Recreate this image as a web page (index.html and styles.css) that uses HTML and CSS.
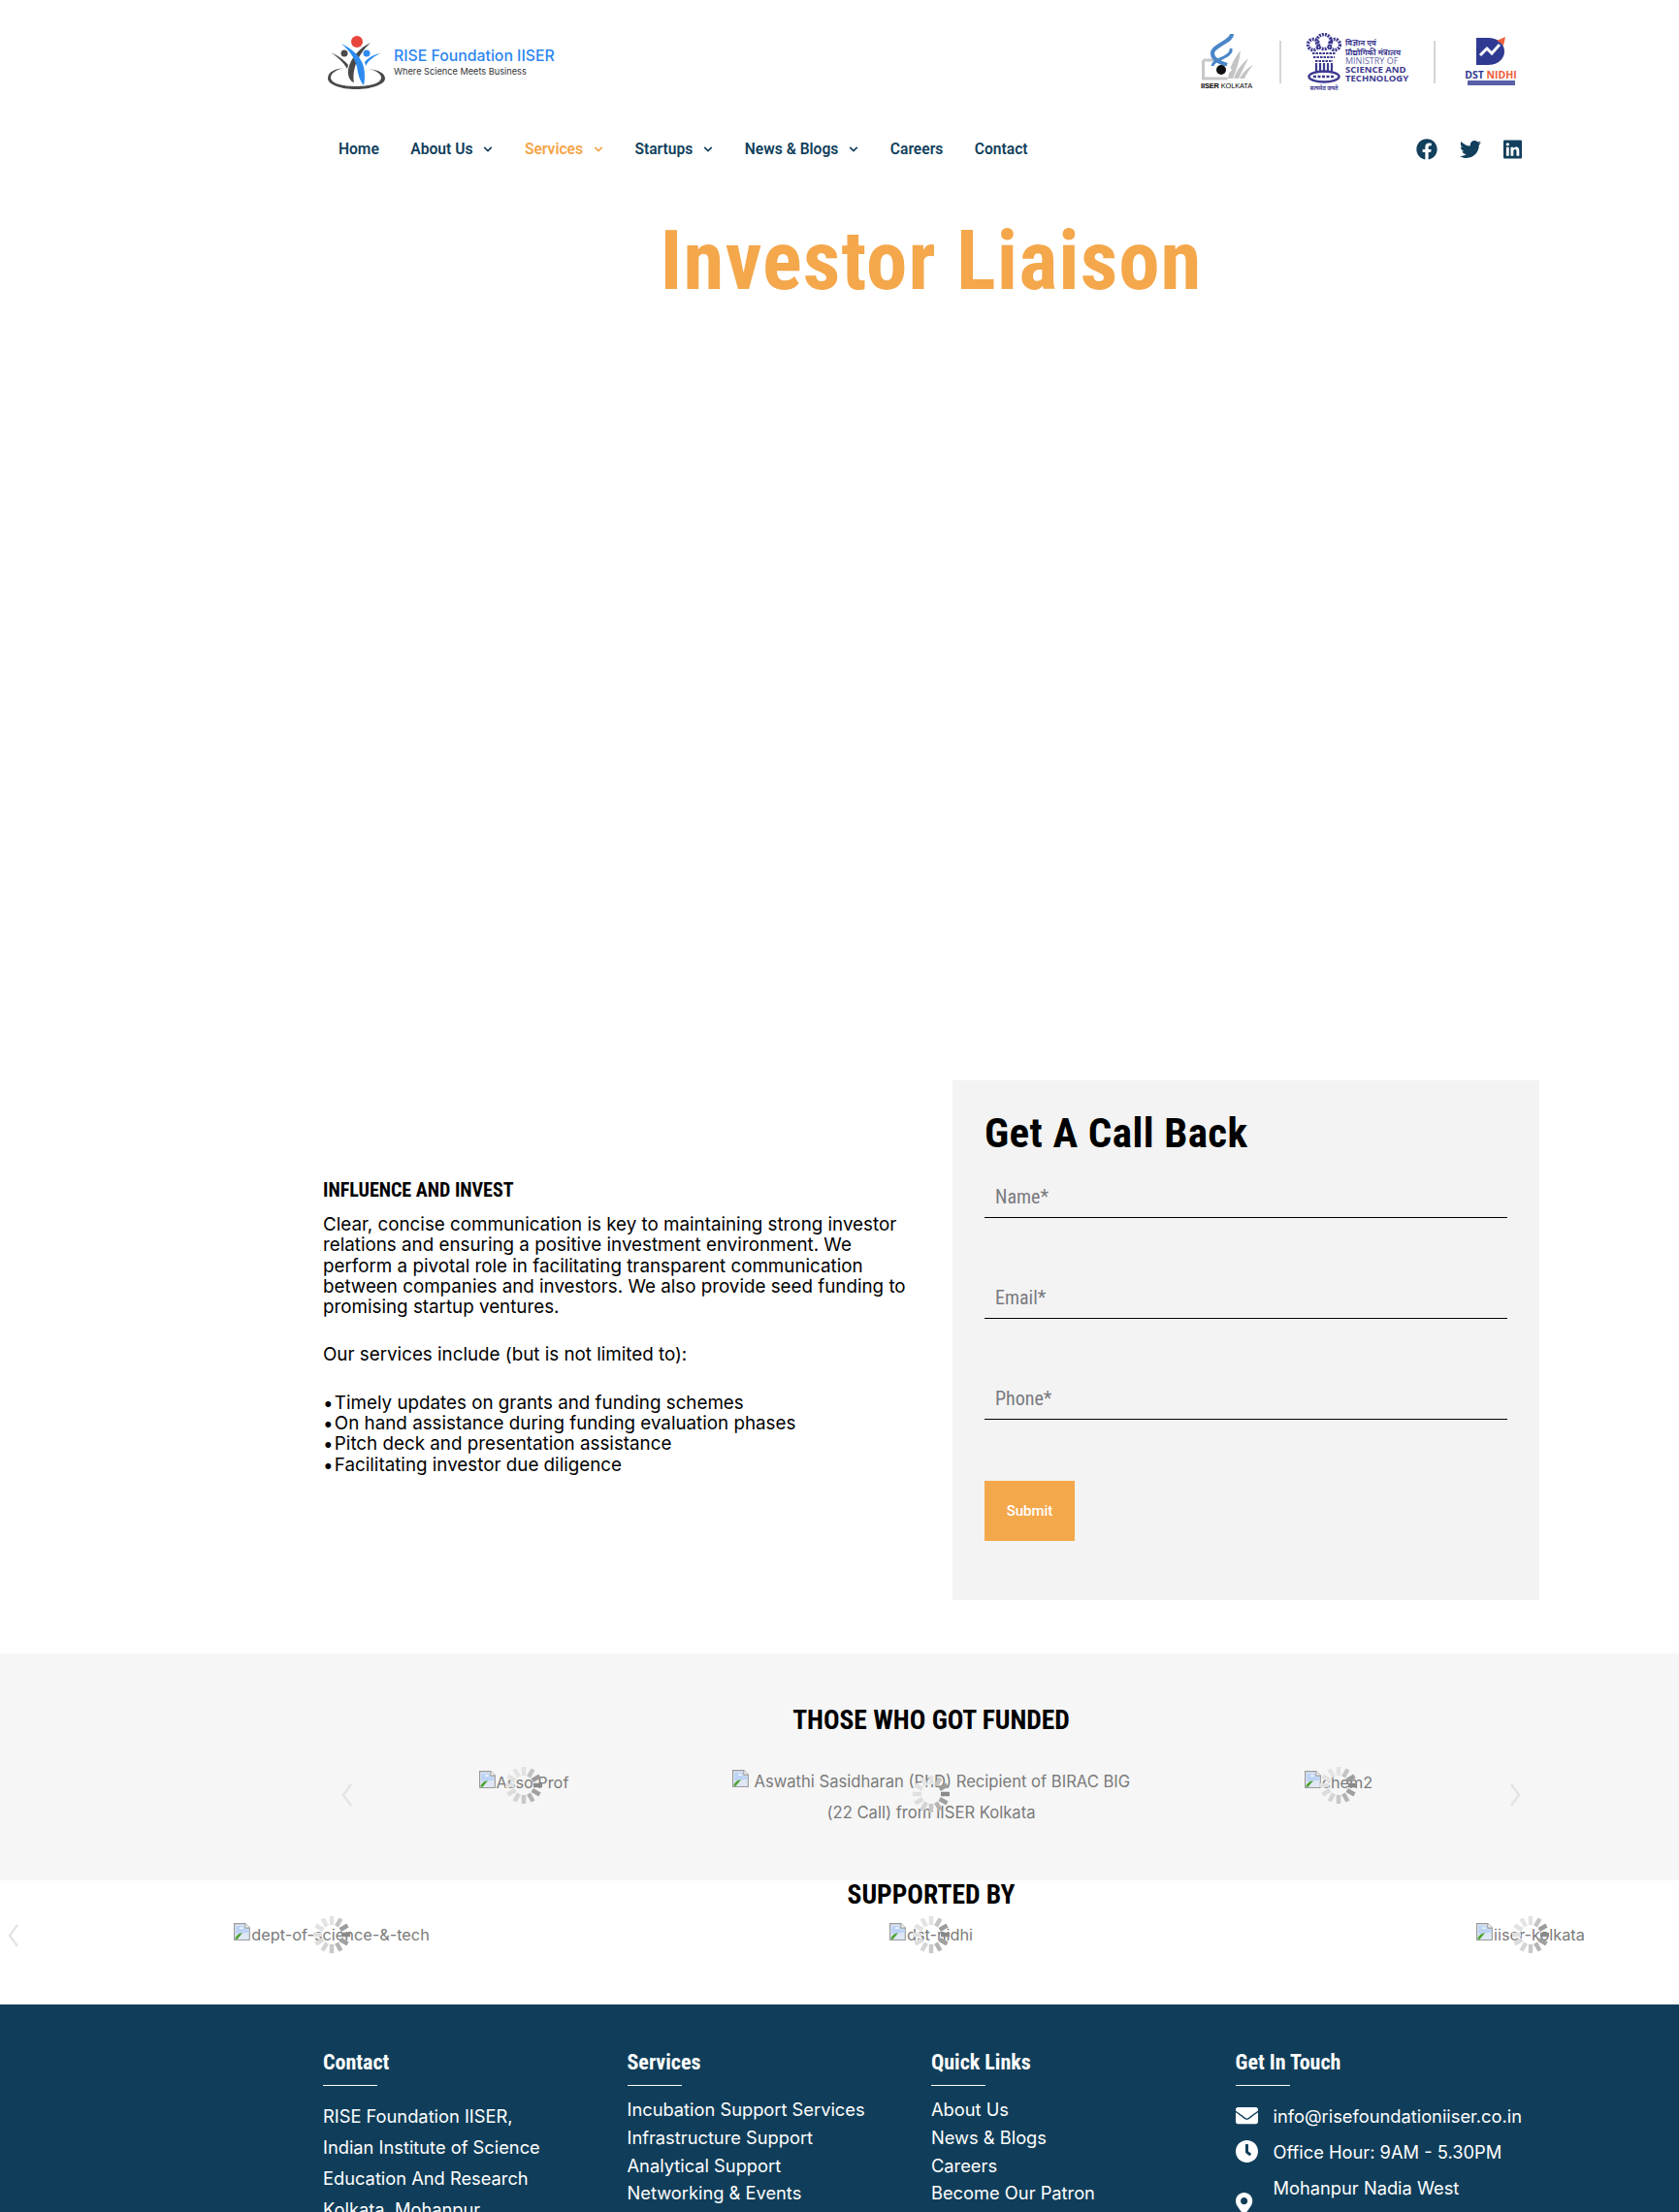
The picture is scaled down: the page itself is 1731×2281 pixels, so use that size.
FILE: index.html
```html
<!DOCTYPE html>
<html lang="en">
<head>
<meta charset="utf-8">
<title>Investor Liaison</title>
<link rel="stylesheet" href="styles.css">
</head>
<body>
<svg class="defs" width="0" height="0" aria-hidden="true">
  <symbol id="broken" viewBox="0 0 16 16">
    <path d="M.5.5h10l4 4v11H.5z" fill="#dfe7f5" stroke="#9a9a9a"/>
    <path d="M10.5.5v4h4" fill="#fff" stroke="#9a9a9a"/>
    <path d="M2 2.5h7.5v3H14v3L2 10z" fill="#bcd3f5"/>
    <path d="M5 5c1-1.500 3-1.500 4 0z" fill="#fff"/>
    <path d="M1 14.500c1-3 4-5.500 7-5.500l-5 6z" fill="#4ca32d"/>
  </symbol>
  <symbol id="spin" viewBox="0 0 40 40">
    <g fill="none" stroke-width="4.500" stroke-linecap="butt">
      <path d="M20 1v9" stroke="#e2e2e2"/>
      <path d="M29.500 3.500l-4.500 7.800" stroke="#c4c4c4"/>
      <path d="M36.500 10.500l-7.800 4.500" stroke="#9c9c9c"/>
      <path d="M39 20h-9" stroke="#8a8a8a"/>
      <path d="M36.500 29.500l-7.800-4.500" stroke="#a0a0a0"/>
      <path d="M29.500 36.500l-4.500-7.800" stroke="#b4b4b4"/>
      <path d="M20 39v-9" stroke="#c8c8c8"/>
      <path d="M10.500 36.500l4.500-7.800" stroke="#d4d4d4"/>
      <path d="M3.500 29.500l7.800-4.500" stroke="#dcdcdc"/>
      <path d="M1 20h9" stroke="#e0e0e0"/>
      <path d="M3.500 10.500l7.800 4.500" stroke="#e2e2e2"/>
      <path d="M10.500 3.500l4.500 7.800" stroke="#e4e4e4"/>
    </g>
  </symbol>
  <symbol id="chev" viewBox="0 0 12 8"><path d="M1.500 1.500L6 6l4.500-4.500" fill="none" stroke="currentColor" stroke-width="2"/></symbol>
  <symbol id="arrow" viewBox="0 0 14 28"><path d="M11 3L3 14l8 11" fill="none" stroke="#e4e4e4" stroke-width="2.500"/></symbol>
</svg>

<div class="page">
  <header class="masthead">
    <div class="brand">
      <svg class="brand-mark" viewBox="0 0 66 62" width="66" height="62" aria-hidden="true">
        <path d="M3 47C3 39 12 37 20 36 11 38 6 42 6 46c0 6 12 9 26 9s26-3 26-9c0-4-6-8-14-9 11 1 18 4 18 10 0 6-14 11-30 11S3 53 3 47z" fill="#4a4a4a"/>
        <circle cx="33" cy="9" r="6" fill="#e8453c"/>
        <circle cx="20" cy="21" r="3.500" fill="#4a4a4a"/>
        <circle cx="43" cy="21" r="3.500" fill="#2e8cf0"/>
        <path d="M47 10C36 15 26 26 24 38c-1 6 2 12 6 13-2-11 2-27 17-41z" fill="#4a4a4a"/>
        <path d="M17 11c10 5 18 11 22 21 3 8 2 18 1 22-4-4-6-12-7-19-2-9-8-17-16-24z" fill="#2e8cf0"/>
        <path d="M6 20c6 3 12 6 18 13l-1 4C19 30 13 25 6 20z" fill="#4a4a4a"/>
        <path d="M57 21c-6 3-12 7-15 13l-1-4c4-5 10-8 16-9z" fill="#2e8cf0"/>
      </svg>
      <div class="brand-text">
        <span class="brand-name">RISE Foundation IISER</span>
        <span class="brand-tag">Where Science Meets Business</span>
      </div>
    </div>
    <div class="partners">
      <div class="partner-iiser">
        <svg viewBox="0 0 54 48" width="54" height="48" aria-hidden="true">
          <path d="M2.500 27h14l4 3M2.500 27v19h25" fill="none" stroke="#c8c8c8" stroke-width="3"/>
          <path d="M28 46c1-10 6-21 13-29-1 10-4 20-8 29z M34 46c3-9 9-16 15-21-3 7-7 14-10 21z M40 46c3-6 8-11 14-14-4 5-7 9-9 14z" fill="#c4c4c4"/>
          <path d="M32 0c0 8-20 12-20 20 0 7 9 10 15 12" fill="none" stroke="#4a86c8" stroke-width="4"/>
          <path d="M12 33c0-4 6-6 12-9 4-2 8-5 7-9" fill="none" stroke="#4a86c8" stroke-width="3"/>
          <path d="M10 37c4-6 18-6 22 0-4 7-18 7-22 0z" fill="#fff"/>
          <circle cx="21" cy="37" r="5" fill="#111"/>
        </svg>
        <span class="iiser-label"><b>IISER</b> KOLKATA</span>
      </div>
      <span class="partner-rule"></span>
      <div class="partner-most">
        <svg viewBox="0 0 36 60" width="36" height="60" aria-hidden="true">
          <g fill="none" stroke="#3d3a8f">
            <circle cx="18" cy="9" r="7.500" stroke-width="3.500" stroke-dasharray="2 1"/>
            <circle cx="7" cy="12" r="5.500" stroke-width="3.500" stroke-dasharray="2 1"/>
            <circle cx="29" cy="12" r="5.500" stroke-width="3.500" stroke-dasharray="2 1"/>
            <path d="M6 21h24M7 25h22M9 29h18" stroke-width="2" stroke-dasharray="2.500 1"/>
            <path d="M10 31v10M14 31v10M18 31v10M22 31v10M26 31v10" stroke-width="2.200"/>
            <ellipse cx="18" cy="45" rx="15.500" ry="5.500" stroke-width="2.500"/>
            <path d="M7 45h22" stroke-width="2.500" stroke-dasharray="3 1.500"/>
          </g>
          <text class="motto" x="18" y="59" text-anchor="middle">सत्यमेव जयते</text>
        </svg>
        <div class="most-text">
          <span class="hi">विज्ञान एवं</span>
          <span class="hi">प्रौद्योगिकी मंत्रालय</span>
          <span class="most-light">MINISTRY OF</span>
          <span class="most-bold">SCIENCE AND</span>
          <span class="most-bold">TECHNOLOGY</span>
        </div>
      </div>
      <span class="partner-rule"></span>
      <div class="partner-dst">
        <svg viewBox="0 0 32 30" width="32" height="30" aria-hidden="true">
          <path d="M1 1h12c10 0 17 6 17 14s-7 14-17 14H1z" fill="#2f3a92"/>
          <path d="M5 19l7-7 5 5 8-9" fill="none" stroke="#fff" stroke-width="3"/>
          <path d="M31 0l-2 9-3-3-4-2z" fill="#f0603c"/>
        </svg>
        <span class="dst-name">DST <em>NIDHI</em></span>
        <span class="dst-bar"></span>
      </div>
    </div>
  </header>

  <nav class="mainnav">
    <ul class="menu">
      <li>Home</li>
      <li>About Us<svg class="chev"><use href="#chev"/></svg></li>
      <li class="active">Services<svg class="chev"><use href="#chev"/></svg></li>
      <li>Startups<svg class="chev"><use href="#chev"/></svg></li>
      <li>News &amp; Blogs<svg class="chev"><use href="#chev"/></svg></li>
      <li>Careers</li>
      <li>Contact</li>
    </ul>
    <div class="socials">
      <svg viewBox="0 0 512 512" width="22" height="22"><path d="M504 256C504 119 393 8 256 8S8 119 8 256c0 123.780 90.690 226.380 209.250 245V327.690h-63V256h63v-54.640c0-62.150 37-96.480 93.670-96.480 27.140 0 55.520 4.840 55.520 4.840v61h-31.280c-30.800 0-40.410 19.120-40.410 38.730V256h68.780l-11 71.690h-57.780V501C413.310 482.380 504 379.780 504 256z"/></svg>
      <svg viewBox="0 0 512 512" width="22" height="22"><path d="M459.370 151.716c.325 4.548.325 9.097.325 13.645 0 138.720-105.583 298.558-298.558 298.558-59.452 0-114.680-17.219-161.137-47.106 8.447.974 16.568 1.299 25.340 1.299 49.055 0 94.213-16.568 130.274-44.832-46.132-.975-84.792-31.188-98.112-72.772 6.498.974 12.995 1.624 19.818 1.624 9.421 0 18.843-1.300 27.614-3.573-48.081-9.747-84.143-51.980-84.143-102.985v-1.299c13.969 7.797 30.214 12.670 47.431 13.319-28.264-18.843-46.781-51.005-46.781-87.391 0-19.492 5.197-37.360 14.294-52.954 51.655 63.675 129.300 105.258 216.365 109.807-1.624-7.797-2.599-15.918-2.599-24.040 0-57.828 46.782-104.934 104.934-104.934 30.213 0 57.502 12.670 76.670 33.137 23.715-4.548 46.456-13.320 66.599-25.340-7.798 24.366-24.366 44.833-46.132 57.827 21.117-2.273 41.584-8.122 60.426-16.243-14.292 20.791-32.161 39.308-52.628 54.253z"/></svg>
      <svg viewBox="0 0 448 512" width="19" height="22"><path d="M416 32H31.900C14.300 32 0 46.500 0 64.300v383.400C0 465.500 14.300 480 31.900 480H416c17.600 0 32-14.500 32-32.300V64.300c0-17.800-14.400-32.300-32-32.300zM135.400 416H69V202.200h66.500V416zm-33.200-243c-21.300 0-38.500-17.300-38.500-38.500S80.900 96 102.200 96c21.200 0 38.500 17.300 38.500 38.500 0 21.300-17.200 38.500-38.500 38.500zm282.100 243h-66.400V312c0-24.800-.5-56.700-34.500-56.700-34.600 0-39.900 27-39.900 54.900V416h-66.400V202.200h63.700v29.200h.9c8.900-16.800 30.600-34.500 62.900-34.500 67.200 0 79.700 44.300 79.700 101.900V416z"/></svg>
    </div>
  </nav>

  <main class="wrap">
    <h1 class="page-title">Investor Liaison</h1>
    <section class="intro">
      <div class="intro-copy">
        <h2 class="intro-head">INFLUENCE AND INVEST</h2>
        <p class="copy">Clear, concise communication is key to maintaining strong investor relations and ensuring a positive investment environment. We perform a pivotal role in facilitating transparent communication between companies and investors. We also provide seed funding to promising startup ventures.</p>
        <p class="copy">Our services include (but is not limited to):</p>
        <p class="copy"><span class="dot">•</span> Timely updates on grants and funding schemes<br><span class="dot">•</span> On hand assistance during funding evaluation phases<br><span class="dot">•</span> Pitch deck and presentation assistance<br><span class="dot">•</span> Facilitating investor due diligence</p>
      </div>
      <form class="callback">
        <h2 class="callback-head">Get A Call Back</h2>
        <div class="field">Name*</div>
        <div class="field">Email*</div>
        <div class="field">Phone*</div>
        <button class="submit" type="button">Submit</button>
      </form>
    </section>
  </main>

  <section class="funded">
    <h2 class="band-head">THOSE WHO GOT FUNDED</h2>
    <div class="slider slider-funded">
      <svg class="arrow arrow-left"><use href="#arrow"/></svg>
      <div class="slide"><span class="alt"><svg class="broken"><use href="#broken"/></svg>Asso Prof</span><svg class="spin"><use href="#spin"/></svg></div>
      <div class="slide slide-wide"><span class="alt alt-wide"><svg class="broken"><use href="#broken"/></svg> Aswathi Sasidharan (PhD) Recipient of BIRAC BIG (22 Call) from IISER Kolkata</span><svg class="spin"><use href="#spin"/></svg></div>
      <div class="slide"><span class="alt"><svg class="broken"><use href="#broken"/></svg>chem2</span><svg class="spin"><use href="#spin"/></svg></div>
      <svg class="arrow arrow-right"><use href="#arrow"/></svg>
    </div>
  </section>

  <section class="supported">
    <h2 class="band-head band-head-tight">SUPPORTED BY</h2>
    <svg class="arrow arrow-edge"><use href="#arrow"/></svg>
    <div class="slider slider-supported">
      <div class="slide"><span class="alt"><svg class="broken"><use href="#broken"/></svg>dept-of-science-&amp;-tech</span><svg class="spin"><use href="#spin"/></svg></div>
      <div class="slide"><span class="alt"><svg class="broken"><use href="#broken"/></svg>dst-nidhi</span><svg class="spin"><use href="#spin"/></svg></div>
      <div class="slide"><span class="alt"><svg class="broken"><use href="#broken"/></svg>iiser-kolkata</span><svg class="spin"><use href="#spin"/></svg></div>
    </div>
  </section>

  <footer class="footer">
    <div class="foot-col">
      <h3 class="foot-head">Contact</h3>
      <p class="foot-address">RISE Foundation IISER,<br>Indian Institute of Science<br>Education And Research<br>Kolkata, Mohanpur</p>
    </div>
    <div class="foot-col">
      <h3 class="foot-head">Services</h3>
      <ul class="foot-links">
        <li>Incubation Support Services</li>
        <li>Infrastructure Support</li>
        <li>Analytical Support</li>
        <li>Networking &amp; Events</li>
      </ul>
    </div>
    <div class="foot-col">
      <h3 class="foot-head">Quick Links</h3>
      <ul class="foot-links">
        <li>About Us</li>
        <li>News &amp; Blogs</li>
        <li>Careers</li>
        <li>Become Our Patron</li>
      </ul>
    </div>
    <div class="foot-col">
      <h3 class="foot-head">Get In Touch</h3>
      <ul class="foot-touch">
        <li><svg viewBox="0 0 512 512" preserveAspectRatio="xMinYMid meet"><path d="M502.300 190.800c3.900-3.100 9.700-.2 9.700 4.700V400c0 26.500-21.500 48-48 48H48c-26.500 0-48-21.500-48-48V195.600c0-5 5.700-7.800 9.700-4.700 22.400 17.400 52.100 39.500 154.100 113.600 21.100 15.400 56.700 47.800 92.200 47.600 35.700.3 72-32.800 92.300-47.600 102-74.100 131.600-96.300 154-113.700zM256 320c23.200.4 56.600-29.200 73.400-41.400 132.700-96.300 142.800-104.700 173.400-128.700 5.800-4.500 9.200-11.500 9.200-18.900v-19c0-26.500-21.500-48-48-48H48C21.500 64 0 85.500 0 112v19c0 7.400 3.400 14.300 9.200 18.900 30.600 23.900 40.700 32.400 173.400 128.700 16.800 12.200 50.200 41.800 73.400 41.400z"/></svg>info@risefoundationiiser.co.in</li>
        <li><svg viewBox="8 8 496 496" preserveAspectRatio="xMinYMid meet"><path d="M256 8C119 8 8 119 8 256s111 248 248 248 248-111 248-248S393 8 256 8zm92.490 313l-20 25a16 16 0 0 1-22.490 2.500l-67-49.720a40 40 0 0 1-15-31.230V112a16 16 0 0 1 16-16h32a16 16 0 0 1 16 16v144l58 42.500a16 16 0 0 1 2.490 22.500z"/></svg>Office Hour: 9AM - 5.30PM</li>
        <li class="touch-tall"><svg viewBox="0 0 384 512" preserveAspectRatio="xMinYMid meet"><path d="M172.268 501.670C26.970 291.031 0 268.413 0 192 0 85.961 85.961 0 192 0s192 85.961 192 192c0 76.413-26.970 99.031-172.268 309.670-9.535 13.774-29.930 13.773-39.464 0zM192 272c44.183 0 80-35.817 80-80s-35.817-80-80-80-80 35.817-80 80 35.817 80 80 80z"/></svg><span>Mohanpur Nadia West<br>Bengal 741246</span></li>
      </ul>
    </div>
  </footer>
</div>
</body>
</html>
```

FILE: styles.css
```css
* { box-sizing: border-box; }
html, body { margin: 0; padding: 0; background: #fff; }
body { font-family: Inter, "Noto Sans", sans-serif; color: #000; }
.defs { position: absolute; }
.page { width: 1731px; height: 2281px; overflow: hidden; }

.masthead { display: flex; justify-content: space-between; align-items: flex-start; height: 122px; padding: 34px 169px 0 335px; }
.brand { display: flex; align-items: flex-start; gap: 5px; }
.brand-text { display: flex; flex-direction: column; padding-top: 14px; }
.brand-name { font: 500 15.800px/20px Inter, sans-serif; color: #2e86f0; white-space: nowrap; }
.brand-tag { font: 400 9.200px/12px Inter, sans-serif; color: #333; white-space: nowrap; }

.partners { display: flex; align-items: flex-start; }
.partner-iiser { width: 54px; margin-right: 27px; display: flex; flex-direction: column; padding-top: 1px; }
.iiser-label { font: 400 7.400px/10px "Liberation Sans", sans-serif; white-space: nowrap; margin-top: 1px; letter-spacing: -.1px; }
.iiser-label b { font-weight: 700; }
.partner-rule { width: 2px; height: 44px; background: #d6d6d6; margin-top: 8px; }
.partner-most { display: flex; gap: 4px; margin-left: 26px; margin-right: 26px; align-items: flex-start; }
.motto { font: 700 5.500px "Noto Sans", sans-serif; fill: #3d3a8f; }
.most-text { display: flex; flex-direction: column; padding-top: 5px; width: 65px; color: #3d3a8f; font-family: "Open Sans", sans-serif; white-space: nowrap; }
.most-text .hi { font: 700 8px/9.500px "Noto Sans", "Noto Sans CJK SC", sans-serif; }
.most-light { font-size: 9px; line-height: 9px; color: #6a68a8; }
.most-bold { font-size: 9.500px; line-height: 9.300px; font-weight: 700; }
.partner-dst { width: 50px; margin-left: 32px; display: flex; flex-direction: column; align-items: center; padding-top: 4px; }
.dst-name { font: 700 10.500px/12px "Open Sans", sans-serif; color: #2f3a92; margin-top: 3px; white-space: nowrap; }
.dst-name em { font-style: normal; color: #ee5d3a; }
.dst-bar { width: 49px; height: 5px; background: #5a60a8; }

.mainnav { display: flex; justify-content: space-between; align-items: center; height: 64px; padding: 0 162px 0 349px; }
.menu { display: flex; list-style: none; margin: 0; padding: 0; gap: 32.500px; font: 600 15.600px/20px Roboto, sans-serif; color: #123f5c; }
.menu li { display: flex; align-items: center; white-space: nowrap; }
.menu .active { color: #f4a54a; }
.chev { width: 10px; height: 8px; margin-left: 11px; }
.socials { display: flex; gap: 23px; align-items: center; fill: #123f5c; }

.wrap { width: 1254px; margin-left: 333px; }
.page-title { margin: 33px 0 0; text-align: center; font: 700 85px/100px "Roboto Condensed", "Liberation Sans Narrow", Roboto, sans-serif; font-stretch: condensed; color: #f4a74b; height: 100px; letter-spacing: 1px; }
.intro { display: flex; margin-top: 795px; }
.intro-copy { width: 649px; padding-top: 100px; }
.intro-head { margin: 0 0 12px; font: 700 20px/26px "Roboto Condensed", "Liberation Sans Narrow", Roboto, sans-serif; font-stretch: condensed; }
.copy { margin: 0 0 28px; font: 400 18.800px/21.300px Inter, sans-serif; width: 612px; }
.dot { margin-right: -4px; }

.callback { width: 605px; height: 536px; background: #f3f3f3; padding: 27px 33px 0; }
.callback-head { margin: 0 0 11px; font: 700 43px/54px "Roboto Condensed", "Liberation Sans Narrow", Roboto, sans-serif; font-stretch: condensed; letter-spacing: .4px; }
.field { height: 50px; margin-bottom: 54px; padding: 16px 11px 0; border-bottom: 1px solid #000; font: 400 20px/24px "Roboto Condensed", Roboto, sans-serif; font-stretch: condensed; color: #7a7a80; }
.submit { display: block; width: 93px; height: 62px; border: 0; background: #f4a84c; color: #fff; font: 500 15px/20px Roboto, sans-serif; margin-top: 63px; padding: 0; }

.funded { margin-top: 55px; height: 234px; background: #f6f6f6; padding: 51px 144px 0 333px; }
.band-head { margin: 0; text-align: center; font: 700 27.500px/36px "Roboto Condensed", "Liberation Sans Narrow", Roboto, sans-serif; font-stretch: condensed; }
.slider { display: flex; position: relative; }
.slider-funded { width: 1254px; margin: 27px 0 0; }
.slide { flex: 1 1 0; position: relative; display: flex; justify-content: center; align-items: flex-start; text-align: center; height: 64px; }
.alt { font: 400 16.300px/32px Inter, sans-serif; color: #7a7a7a; white-space: nowrap; padding-top: 3px; }
.alt-wide { font-size: 16.600px; white-space: normal; width: 426px; padding-top: 0; margin-top: 2px; }
.broken { width: 18px; height: 18px; }
.spin { width: 40px; height: 40px; position: absolute; left: 50%; top: 2px; margin-left: -20px; }
.slide-wide .spin { top: 11px; }
.arrow { width: 14px; height: 28px; position: absolute; }
.arrow-left { left: 18px; top: 18px; }
.arrow-right { right: 18px; top: 18px; transform: scaleX(-1); }

.supported { position: relative; height: 128px; padding-top: 1px; }
.band-head-tight { line-height: 28px; padding: 0 144px 0 333px; }
.slider-supported { width: 1854px; margin: 7px 0 0 33px; }
.slider-supported .alt { padding-top: 4px; }
.slider-supported .spin { top: 0; }
.arrow-edge { left: 7px; top: 43px; }

.footer { display: grid; grid-template-columns: repeat(4, 313.500px); height: 240px; padding: 46px 0 0 333px; background: #103e5a; color: #fff; }
.foot-head { margin: 0; padding-bottom: 6px; font: 700 22px/28px "Roboto Condensed", "Liberation Sans Narrow", Roboto, sans-serif; font-stretch: condensed; position: relative; height: 38px; }
.foot-head::after { content: ""; position: absolute; left: 0; bottom: 0; width: 56px; height: 1px; background: #fff; }
.foot-address { margin: 15px 0 0; font: 400 18.300px/32px Inter, sans-serif; }
.foot-links { list-style: none; margin: 10px 0 0; padding: 0; font: 400 18.300px/28.800px Inter, sans-serif; }
.foot-touch { list-style: none; margin: 12px 0 0; padding: 0; font: 400 18.300px/32px Inter, sans-serif; }
.foot-touch li { display: flex; align-items: center; gap: 16px; height: 37px; fill: #fff; white-space: nowrap; }
.foot-touch svg { flex: none; width: 23px; height: 23px; }
.foot-touch .touch-tall { height: 64px; margin-top: 3px; }
```
